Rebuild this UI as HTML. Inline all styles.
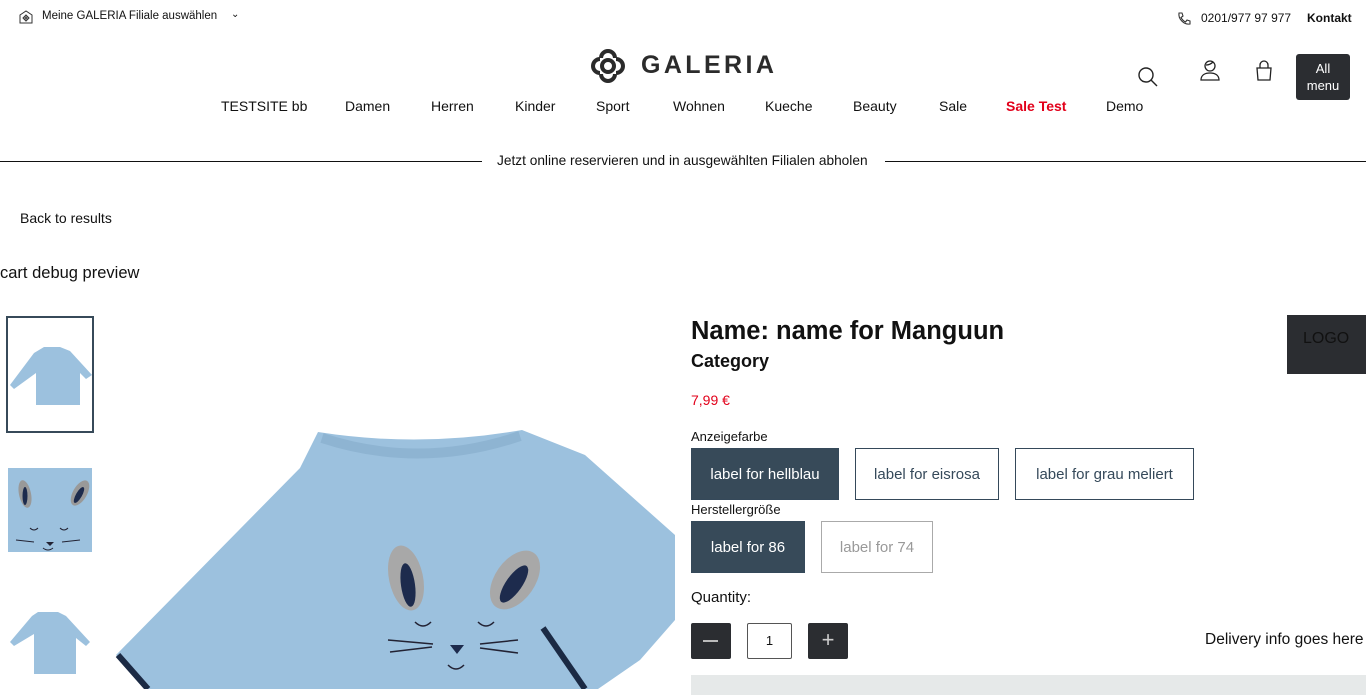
<!DOCTYPE html>
<html><head><meta charset="utf-8"><style>
*{box-sizing:border-box;margin:0;padding:0}
body{width:1366px;height:689px;overflow:hidden;background:#fff;font-family:"Liberation Sans",sans-serif;color:#111;position:relative}
.a{position:absolute;white-space:nowrap}
.nav{font-size:14px;color:#111;top:98px}
.btn{position:absolute;height:52px;display:flex;align-items:center;justify-content:center;font-size:15px;border:1px solid #35495a;color:#35495a}
.sel{background:#374a59;color:#fff}
</style></head><body>
<svg class="a" style="left:18px;top:9px" width="16" height="16" viewBox="0 0 16 16" fill="none" stroke="#333" stroke-width="1"><path d="M2 6L8 2l6 4v8H2z"/><path d="M8 6l3 3-3 3-3-3z"/><circle cx="8" cy="9" r="1"/></svg>
<div class="a" style="left:42px;top:10px;font-size:11.5px">Meine GALERIA Filiale auswählen</div>
<div class="a" style="left:231px;top:9px;font-size:10px">⌄</div>
<svg class="a" style="left:1176px;top:11px" width="16" height="16" viewBox="0 0 16 16" fill="none" stroke="#333" stroke-width="1.1"><path d="M3 2l3 0 1 3-2 1.5c1 2 2.5 3.5 4.5 4.5L11 9l3 1v3c-6 1-12-5-11-11z"/></svg>
<div class="a" style="left:1201px;top:11px;font-size:12px">0201/977 97 977</div>
<div class="a" style="left:1307px;top:11px;font-size:12px;font-weight:bold">Kontakt</div>

<svg class="a" style="left:587px;top:45px" width="42" height="42" viewBox="0 0 42 42" fill="none" stroke="#2b2b2b" stroke-width="4"><path d="M14 13A7 7 0 0 1 28 13M29 14A7 7 0 0 1 29 28M28 29A7 7 0 0 1 14 29M13 28A7 7 0 0 1 13 14"/><circle cx="21" cy="21" r="6"/></svg>
<div class="a" style="left:641px;top:51px;font-size:25px;font-weight:bold;letter-spacing:3.4px;color:#2b2b2b">GALERIA</div>

<div class="a nav" style="left:221px">TESTSITE bb</div>
<div class="a nav" style="left:345px">Damen</div>
<div class="a nav" style="left:431px">Herren</div>
<div class="a nav" style="left:515px">Kinder</div>
<div class="a nav" style="left:596px">Sport</div>
<div class="a nav" style="left:673px">Wohnen</div>
<div class="a nav" style="left:765px">Kueche</div>
<div class="a nav" style="left:853px">Beauty</div>
<div class="a nav" style="left:939px">Sale</div>
<div class="a nav" style="left:1006px;color:#e2001a;font-weight:bold">Sale Test</div>
<div class="a nav" style="left:1106px">Demo</div>

<svg class="a" style="left:1137px;top:66px" width="22" height="22" viewBox="0 0 22 22" fill="none" stroke="#222" stroke-width="1.4"><circle cx="9" cy="9" r="7"/><path d="M14 14l6 6"/></svg>
<svg class="a" style="left:1199px;top:59px" width="22" height="22" viewBox="0 0 22 22" fill="none" stroke="#222" stroke-width="1.3"><circle cx="11" cy="7" r="5"/><path d="M7 6c3 0 5-1 7-3M2 21c0-5 4-7 9-7s9 2 9 7z"/></svg>
<svg class="a" style="left:1254px;top:60px" width="20" height="22" viewBox="0 0 20 22" fill="none" stroke="#222" stroke-width="1.3"><path d="M3 8h14l-1 12H4z"/><path d="M6 8V5a4 4 0 0 1 8 0v3"/></svg>
<div class="a" style="left:1296px;top:54px;width:54px;height:46px;background:#2b2d31;border-radius:3px;color:#fff;font-size:13px;text-align:center;line-height:17px;padding-top:6px;white-space:normal">All<br>menu</div>

<div class="a" style="left:0;top:161px;width:482px;border-top:1px solid #111"></div>
<div class="a" style="left:885px;top:161px;width:481px;border-top:1px solid #111"></div>
<div class="a" style="left:497px;top:153px;font-size:13.7px">Jetzt online reservieren und in ausgewählten Filialen abholen</div>

<div class="a" style="left:20px;top:210px;font-size:14px">Back to results</div>
<div class="a" style="left:0;top:264px;font-size:16.5px">cart debug preview</div>

<div class="a" style="left:6px;top:316px;width:88px;height:117px;border:2px solid #374a59"></div>
<svg class="a" style="left:8px;top:345px" width="84" height="62" viewBox="0 0 84 62"><path d="M36 2h16l10 4 22 24-6 4-6-6v32H28V28l-22 16-4-4 24-32z" fill="#9cc1de"/></svg>
<div class="a" style="left:8px;top:468px;width:84px;height:84px;background:#9cc1de"></div>
<svg class="a" style="left:8px;top:468px" width="84" height="84" viewBox="0 0 84 84"><ellipse cx="17" cy="26" rx="6" ry="14" fill="#999" transform="rotate(-12 17 26)"/><ellipse cx="17" cy="28" rx="2.5" ry="9" fill="#1d2b4d"/><ellipse cx="72" cy="25" rx="7" ry="14" fill="#999" transform="rotate(30 72 25)"/><ellipse cx="71" cy="27" rx="3" ry="9" fill="#1d2b4d" transform="rotate(30 71 27)"/><path d="M22 60q4 4 8 0M52 60q4 4 8 0M8 72l18 2M54 74l18-2M35 80q5 4 10 0" stroke="#223" fill="none"/><path d="M38 74h8l-4 4z" fill="#223"/></svg>
<svg class="a" style="left:8px;top:608px" width="84" height="70" viewBox="0 0 84 70"><path d="M30 4h20l8 4 24 26-4 4-10-8v36H26V26L6 38 2 34 24 8z" fill="#9cc1de"/></svg>

<svg class="a" style="left:110px;top:425px" width="570" height="264" viewBox="110 425 570 264">
<path d="M318 432Q420 448 522 430L585 455L675 535L675 620L640 660L598 689L148 689L116 655L300 468Z" fill="#9cc1de"/>
<path d="M322 438Q420 470 520 436" stroke="#8eb4d2" stroke-width="10" fill="none"/>
<path d="M118 655L148 689" stroke="#1b2a44" stroke-width="6"/><path d="M543 628L585 689" stroke="#1b2a44" stroke-width="6"/>
<ellipse cx="406" cy="578" rx="17" ry="33" fill="#a8a8a8" transform="rotate(-12 406 578)"/><ellipse cx="408" cy="585" rx="7" ry="22" fill="#1d2b4d" transform="rotate(-8 408 585)"/>
<ellipse cx="515" cy="580" rx="20" ry="33" fill="#a8a8a8" transform="rotate(35 515 580)"/><ellipse cx="514" cy="584" rx="8" ry="22" fill="#1d2b4d" transform="rotate(35 514 584)"/>
<path d="M415 622q8 8 16 0M478 622q8 8 16 0M388 640l45 4M390 652l42-5M480 644l38-4M480 648l38 5M448 665q8 8 16 0" stroke="#223" stroke-width="1.5" fill="none"/>
<path d="M450 645h14l-7 9z" fill="#1d2b4d"/>
</svg>

<div class="a" style="left:691px;top:317px;font-size:25.5px;font-weight:bold">Name: name for Manguun</div>
<div class="a" style="left:691px;top:351px;font-size:18px;font-weight:bold">Category</div>
<div class="a" style="left:691px;top:392px;font-size:14px;color:#e2001a">7,99 €</div>
<div class="a" style="left:1287px;top:315px;width:79px;height:59px;background:#2b2d31;color:#111;font-size:16px;padding:15px 0 0 16px">LOGO</div>
<div class="a" style="left:691px;top:429px;font-size:13px">Anzeigefarbe</div>
<div class="btn sel" style="left:691px;top:448px;width:148px">label for hellblau</div>
<div class="btn" style="left:855px;top:448px;width:144px">label for eisrosa</div>
<div class="btn" style="left:1015px;top:448px;width:179px">label for grau meliert</div>
<div class="a" style="left:691px;top:502px;font-size:13px">Herstellergröße</div>
<div class="btn sel" style="left:691px;top:521px;width:114px">label for 86</div>
<div class="btn" style="left:821px;top:521px;width:112px;border-color:#aaa;color:#999">label for 74</div>
<div class="a" style="left:691px;top:589px;font-size:15px">Quantity:</div>
<div class="a" style="left:691px;top:623px;width:40px;height:36px;background:#2b2d31;border-radius:2px"></div>
<div class="a" style="left:703px;top:640px;width:15px;height:1.5px;background:#bbb"></div>
<div class="a" style="left:747px;top:623px;width:45px;height:36px;border:1px solid #555;border-radius:2px;font-size:13px;text-align:center;line-height:34px">1</div>
<div class="a" style="left:808px;top:623px;width:40px;height:36px;background:#2b2d31;border-radius:2px;color:#ccc;font-size:22px;text-align:center;line-height:34px">+</div>
<div class="a" style="left:1205px;top:631px;font-size:15.5px">Delivery info goes here</div>
<div class="a" style="left:691px;top:675px;width:675px;height:20px;background:#e6e9e9"></div>
</body></html>
